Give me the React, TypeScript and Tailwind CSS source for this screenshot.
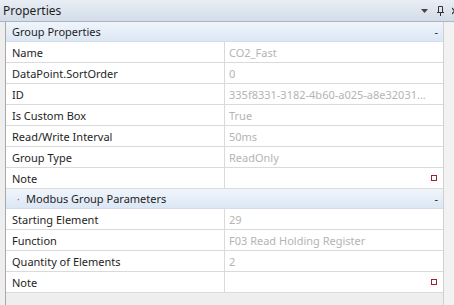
import React from "react";

type Row = { label: string; value?: string; note?: boolean };

const groupRows: Row[] = [
  { label: "Name", value: "CO2_Fast" },
  { label: "DataPoint.SortOrder", value: "0" },
  { label: "ID", value: "335f8331-3182-4b60-a025-a8e32031..." },
  { label: "Is Custom Box", value: "True" },
  { label: "Read/Write Interval", value: "50ms" },
  { label: "Group Type", value: "ReadOnly" },
  { label: "Note", note: true },
];

const modbusRows: Row[] = [
  { label: "Starting Element", value: "29" },
  { label: "Function", value: "F03 Read Holding Register" },
  { label: "Quantity of Elements", value: "2" },
  { label: "Note", note: true },
];

function CategoryHeader({ title, bullet }: { title: string; bullet?: boolean }) {
  return (
    <div className="flex h-[20px] items-center border-b border-[#d6dde8] bg-gradient-to-b from-[#f1f5fb] to-[#dbe7f5] pl-[6px] pr-[5px]">
      {bullet && <span className="w-[14px] shrink-0 pl-[5px] text-[10px] text-[#707070]">·</span>}
      <span className="text-[#1e1e1e]">{title}</span>
      <span className="ml-auto text-[#1e1e1e]">-</span>
    </div>
  );
}

function PropertyRow({ row }: { row: Row }) {
  return (
    <div className="flex h-[21px] border-b border-[#dadada] bg-white">
      <div className="flex w-[219px] shrink-0 items-center border-r border-[#dadada] pl-[6px] text-[#1e1e1e]">
        {row.label}
      </div>
      <div className="flex min-w-0 flex-1 items-center pl-[4px] pr-[6px] text-[#b4b4b4]">
        <span className="whitespace-nowrap">{row.value}</span>
        {row.note && <span className="ml-auto h-[6px] w-[6px] border border-[#a0222c]" />}
      </div>
    </div>
  );
}

export default function App() {
  return (
    <div
      className="flex h-[305px] w-[454px] flex-col overflow-hidden bg-[#eeeeee] text-[11px] leading-none"
      style={{ fontFamily: '"Segoe UI", "Noto Sans", sans-serif' }}
    >
      <div className="flex h-[22px] shrink-0 items-center border-b border-[#aab6c6] bg-gradient-to-b from-[#e9eef5] to-[#d3dce8] pl-[3px] text-[12px]">
        <span className="text-[#1e1e1e]">Properties</span>
        <div className="ml-auto mr-[-4px] flex items-center gap-[8px] text-[#3c3c3c]">
          <svg width="8" height="6" viewBox="0 0 8 6">
            <path d="M0 1h7L3.5 5z" fill="#444" />
          </svg>
          <svg width="7" height="10" viewBox="0 0 7 10">
            <path d="M1.5 0.5h4v6h-4z M0 6.5h7 M3.5 6.5v3.5" stroke="#333" fill="none" strokeWidth="1" />
          </svg>
          <svg width="6" height="8" viewBox="0 0 6 8">
            <path d="M0 1l5 6M5 1L0 7" stroke="#333" strokeWidth="1.2" />
          </svg>
        </div>
      </div>
      <div className="flex flex-1">
        <div className="ml-[5px] w-[438px] border-l border-[#a9a9a9]">
          <CategoryHeader title="Group Properties" />
          {groupRows.map((r, i) => (
            <PropertyRow key={i} row={r} />
          ))}
          <CategoryHeader title="Modbus Group Parameters" bullet />
          {modbusRows.map((r, i) => (
            <PropertyRow key={i} row={r} />
          ))}
        </div>
        <div className="w-[11px] border-l border-[#d0d0d0] bg-[#f2f2f2]" />
      </div>
    </div>
  );
}
